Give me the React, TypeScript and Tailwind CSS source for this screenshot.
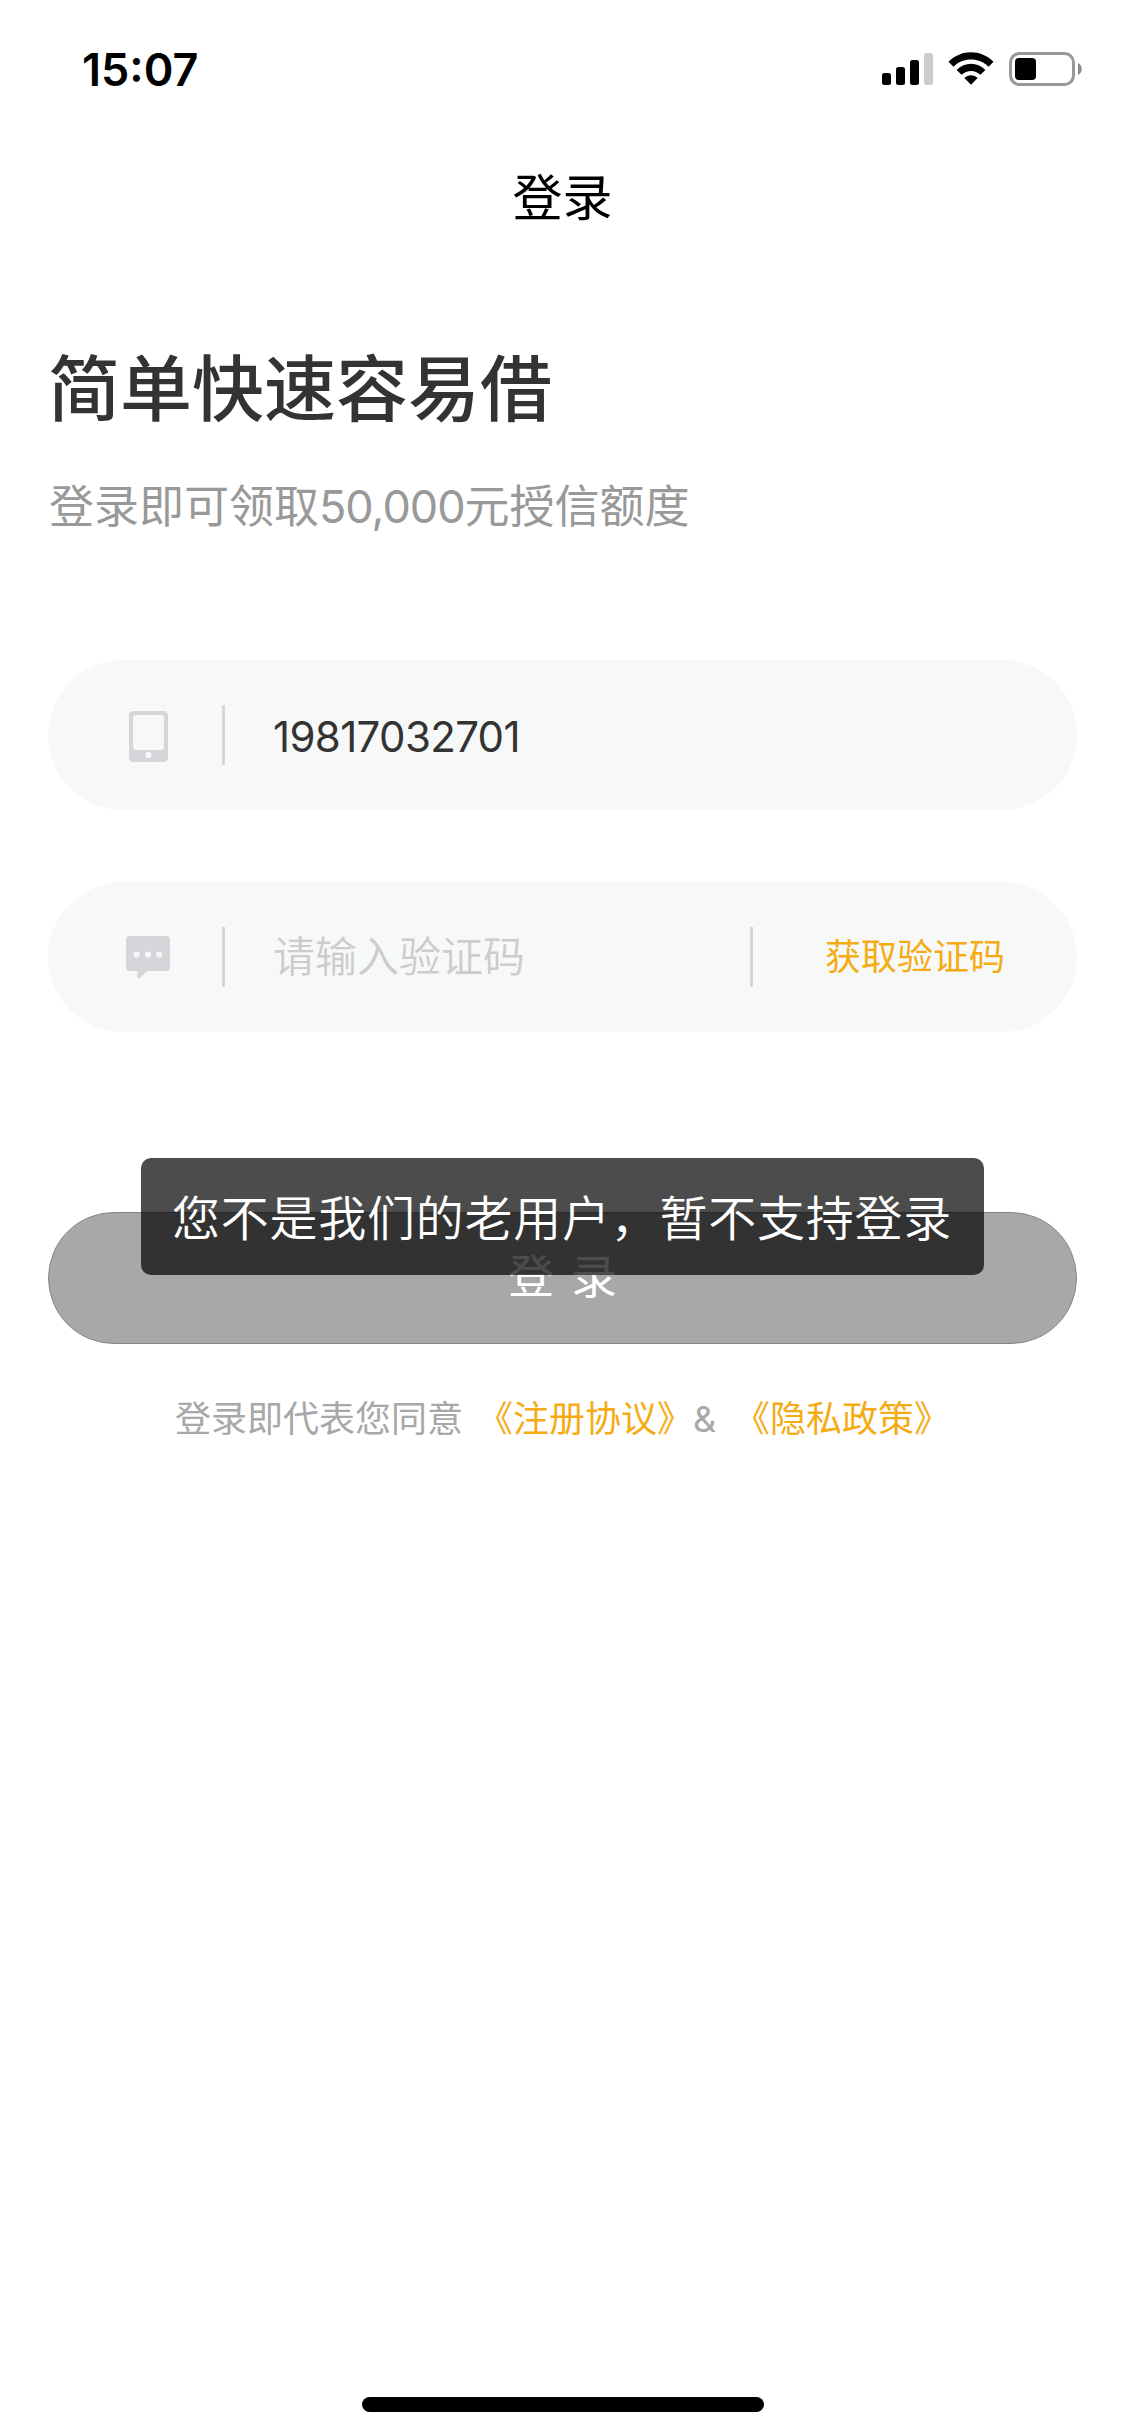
import type { ReactNode } from "react";

function SignalIcon() {
  return (
    <svg width="51" height="32" viewBox="0 0 51 32">
      <rect x="0" y="20" width="9" height="12" rx="2.5" />
      <rect x="14" y="14" width="9" height="18" rx="2.5" />
      <rect x="28" y="7" width="9" height="25" rx="2.5" />
      <rect x="42" y="0" width="9" height="32" rx="2.5" fill="#cccccc" />
    </svg>
  );
}

function WifiIcon() {
  return (
    <svg width="46" height="34" viewBox="0 0 46 34">
      <path d="M0.5 9.8 C13 -2.9 33 -2.9 45.5 9.8 L40.5 14.7 C31 5.1 15 5.1 5.5 14.7 Z" />
      <path d="M8.6 17.9 C16.8 9.8 29.2 9.8 37.4 17.9 L32.4 22.8 C27.2 17.6 18.8 17.6 13.6 22.8 Z" />
      <path d="M16.4 26 C20 22.2 26 22.2 29.6 26 L23 32.7 Z" />
    </svg>
  );
}

function BatteryIcon() {
  return (
    <svg width="74" height="34" viewBox="0 0 74 34">
      <rect x="1.5" y="1.5" width="63" height="31" rx="9" fill="none" stroke="#999999" strokeWidth="3" />
      <rect x="6" y="6" width="21" height="22" rx="4" />
      <path d="M69 11 C74 13 74 21 69 23 Z" fill="#8c8c8c" />
    </svg>
  );
}

function PhoneIcon() {
  return (
    <svg width="39" height="54" viewBox="0 -3 39 54">
      <rect width="39" height="51" rx="4.5" fill="#d5d6da" />
      <rect x="4" y="4" width="31" height="35" rx="3" fill="#f7f9f8" />
      <circle cx="19.5" cy="44" r="3" fill="#f7f9f8" />
    </svg>
  );
}

function MessageIcon() {
  return (
    <svg width="44" height="43" viewBox="0 0 44 43">
      <path
        d="M3.5 0 H40.5 Q44 0 44 3.5 V31.5 Q44 35 40.5 35 H22 L13.5 42 Q11.5 43 11.5 41 V35 H3.5 Q0 35 0 31.5 V3.5 Q0 0 3.5 0 Z"
        fill="#d5d6da"
      />
      <circle cx="10.7" cy="18.5" r="3" fill="#f7f9f8" />
      <circle cx="22" cy="18.5" r="3" fill="#f7f9f8" />
      <circle cx="33.2" cy="18.5" r="3" fill="#f7f9f8" />
    </svg>
  );
}

function Divider() {
  return <span className="h-[60px] w-[3px] shrink-0 bg-[#d6d7d7]" />;
}

function Field({ icon, children }: { icon: ReactNode; children: ReactNode }) {
  return (
    <div className="flex h-[150px] items-center rounded-full bg-[#f7f9f8]">
      <span className="flex w-[174px] shrink-0 pl-[78px]">
        <span className="flex w-[44px] justify-center">{icon}</span>
      </span>
      <Divider />
      {children}
    </div>
  );
}

export default function App() {
  return (
    <div className="relative flex h-[2436px] w-[1125px] flex-col bg-white font-['Inter','Noto_Sans_CJK_SC',sans-serif]">
      <header className="flex h-[138px] items-center justify-between pl-[82px] pr-[42px]">
        <span className="text-[45px] leading-none font-semibold text-black">15:07</span>
        <div className="flex items-center gap-[15px]">
          <SignalIcon />
          <WifiIcon />
          <BatteryIcon />
        </div>
      </header>

      <h1 className="h-[120px] text-center text-[50px] leading-[121px] text-black">登录</h1>

      <main className="flex flex-col px-[48px]">
        <h2 className="mt-[81px] h-[100px] text-[72px] leading-[100px] font-medium text-[#333333]">
          简单快速容易借
        </h2>
        <p className="mt-[28px] h-[80px] pl-px text-[45px] leading-[80px] text-[#999999]">
          登录即可领取<span className="tracking-[-1px]">50,000</span>元授信额度
        </p>

        <form className="mt-[113px] flex flex-col">
          <Field icon={<PhoneIcon />}>
            <span className="pt-[3px] pl-[48px] text-[42px] leading-none tracking-[-0.65px] text-[#333333]">
              19817032701
            </span>
          </Field>
          <div className="h-[72px]" />
          <Field icon={<MessageIcon />}>
            <span className="w-[525px] pl-[48px] text-[42px] leading-none font-[350] text-[#cccccc]">
              请输入验证码
            </span>
            <Divider />
            <button type="button" className="flex-1 text-center text-[36px] leading-none text-[#f5ac14]">
              获取验证码
            </button>
          </Field>

          <button
            type="button"
            className="mt-[180px] h-[132px] rounded-full border border-[#868686] bg-[#a8a8a8] pb-[4px] text-[46px] leading-none [word-spacing:4px] text-white"
          >
            登&nbsp;录
          </button>
        </form>

        <p className="mt-[45px] flex h-[60px] items-center justify-center text-[36px] leading-none whitespace-nowrap text-[#a8a8a8]">
          <span className="mr-[14px]">登录即代表您同意</span>
          <a className="text-[#f5ac14]">《注册协议》</a>
          <span className="mr-[18px]">&amp;</span>
          <a className="text-[#f5ac14]">《隐私政策》</a>
        </p>
      </main>

      <div className="absolute top-[1158px] left-[141px] h-[117px] w-[843px] rounded-[10px] bg-black/70 pr-[1px] text-center text-[48px] leading-[122px] font-[350] tracking-[0.75px] whitespace-nowrap text-white">
        您不是我们的老用户，暂不支持登录
      </div>

      <div className="mt-auto mb-[24px] h-[15px] w-[402px] self-center rounded-full bg-black" />
    </div>
  );
}
